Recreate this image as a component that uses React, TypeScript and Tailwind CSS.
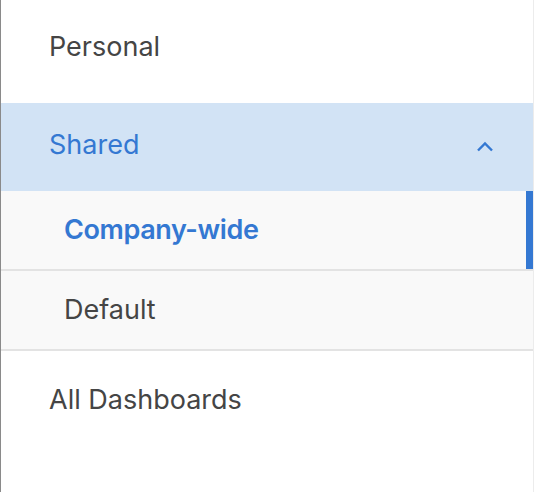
import React, { useState } from 'react';

const subItems = ['Company-wide', 'Default'];

export default function App() {
  const [open, setOpen] = useState(true);
  const [active, setActive] = useState('Company-wide');

  return (
    <div className="w-[534px] h-[492px] bg-white flex" style={{ fontFamily: 'Inter, Roboto, "Liberation Sans", sans-serif' }}>
      <div className="flex-1 flex flex-col border-l border-[#8a8a8a] border-r border-r-[#ececec] text-[27px] text-[#454545]">
        <div className="h-[103px] flex items-center pl-[48px] pb-[8px]">Personal</div>

        <button
          onClick={() => setOpen(!open)}
          className="h-[88px] bg-[#d2e3f5] text-[#3478d2] flex items-center justify-between pl-[48px] pr-[39px] pb-[4px] text-left"
        >
          <span>Shared</span>
          <svg width="18" height="11" viewBox="0 0 18 11" fill="none" className="mt-[2px]">
            <path d={open ? 'M2 9.5 L9 2.5 L16 9.5' : 'M2 2.5 L9 9.5 L16 2.5'} stroke="#3478d2" strokeWidth="2.4" />
          </svg>
        </button>

        {open &&
          subItems.map((item) => (
            <div
              key={item}
              onClick={() => setActive(item)}
              className="h-[80px] bg-[#f9f9f9] border-b-2 border-[#e3e3e3] flex items-stretch"
            >
              <div
                className={`flex-1 flex items-center pl-[63px] ${
                  active === item ? 'text-[#3478d2] font-semibold tracking-[-0.4px]' : ''
                }`}
              >
                {item}
              </div>
              {active === item && <div className="w-[7px] bg-[#3478d2]" />}
            </div>
          ))}

        <div className="h-[99px] flex items-center pl-[48px]">All Dashboards</div>
      </div>
    </div>
  );
}
